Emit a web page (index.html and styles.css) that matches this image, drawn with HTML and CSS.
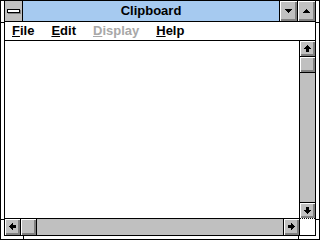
FILE: index.html
```html
<html>
<head>
<meta http-equiv="Content-Type" content="text/html; charset=UTF-8">
<link rel="stylesheet" href="styles.css">
</head>
<body>

<div id="clipboard-window">
    <div class="frame">
        <div class="title-bar">
            <div class="sys-menu"><span class="sys-bar"></span></div>
            <div class="caption">Clipboard</div>
            <div class="cap-button">
                <svg width="7" height="4" viewBox="0 0 7 4" shape-rendering="crispEdges"><path d="M0 0h7v1h-1v1h-1v1h-1v1h-1v-1h-1v-1h-1v-1h-1z" fill="#000"/></svg>
            </div>
            <div class="cap-button">
                <svg width="7" height="4" viewBox="0 0 7 4" shape-rendering="crispEdges"><path d="M3 0h1v1h1v1h1v1h1v1h-7v-1h1v-1h1v-1h1z" fill="#000"/></svg>
            </div>
        </div>

        <div class="menu-bar">
            <span class="menu-item"><u>F</u>ile</span>
            <span class="menu-item"><u>E</u>dit</span>
            <span class="menu-item disabled"><u>D</u>isplay</span>
            <span class="menu-item"><u>H</u>elp</span>
        </div>

        <div class="main-area">
            <div class="client"></div>
            <div class="v-scroll">
                <div class="scroll-button">
                    <svg width="7" height="7" viewBox="0 0 7 7" shape-rendering="crispEdges"><path d="M3 0h1v1h1v1h1v1h1v1h-2v3h-3v-3h-2v-1h1v-1h1v-1h1z" fill="#000"/></svg>
                </div>
                <div class="scroll-thumb"></div>
                <div class="scroll-track"></div>
                <div class="scroll-button end">
                    <svg width="7" height="7" viewBox="0 0 7 7" shape-rendering="crispEdges"><path d="M2 0h3v3h2v1h-1v1h-1v1h-1v1h-1v-1h-1v-1h-1v-1h-1v-1h2z" fill="#000"/></svg>
                </div>
            </div>
        </div>

        <div class="h-scroll">
            <div class="scroll-button">
                <svg width="7" height="7" viewBox="0 0 7 7" shape-rendering="crispEdges"><path d="M3 0h1v2h3v3h-3v2h-1v-1h-1v-1h-1v-1h-1v-1h1v-1h1v-1h1z" fill="#000"/></svg>
            </div>
            <div class="scroll-thumb"></div>
            <div class="scroll-track"></div>
            <div class="scroll-button end">
                <svg width="7" height="7" viewBox="0 0 7 7" shape-rendering="crispEdges"><path d="M3 0h1v1h1v1h1v1h1v1h-1v1h-1v1h-1v1h-1v-2h-3v-3h3z" fill="#000"/></svg>
            </div>
            <div class="size-box"></div>
        </div>
    </div>

    <!-- corner marks of the sizing border -->
    <span class="tick tick-v" style="left: 22px; bottom: 0;"></span>
    <span class="tick tick-v" style="left: 297px; bottom: 0;"></span>
    <span class="tick tick-h" style="left: 0; top: 21px;"></span>
    <span class="tick tick-h" style="right: 0; top: 21px;"></span>
    <span class="tick tick-h" style="left: 0; top: 218px;"></span>
    <span class="tick tick-h" style="right: 0; top: 218px;"></span>
</div>

</body>
</html>
```

FILE: styles.css
```css
body {
    margin: 0;
    background: #fff;
}

#clipboard-window {
    position: relative;
    width: 320px;
    height: 240px;
    box-sizing: border-box;
    border: 1px solid #000;
    padding: 0 3px 3px 3px;
    background: #fff;
    font-family: "Liberation Sans", Arial, sans-serif;
    font-size: 13px;
    font-weight: bold;
}

.frame {
    display: flex;
    flex-direction: column;
    height: 100%;
    border: 1px solid #000;
    border-top: none;
    box-sizing: border-box;
}

.title-bar {
    display: flex;
    height: 20px;
    border-bottom: 1px solid #000;
    background: #a6caf0;
}

.sys-menu {
    width: 17px;
    border-right: 1px solid #000;
    background: #c0c0c0;
    display: flex;
    align-items: center;
    justify-content: center;
}

.sys-bar {
    width: 11px;
    height: 2px;
    background: #fff;
    border: 1px solid #000;
    box-shadow: 1px 1px 0 #808080;
}

.caption {
    flex: 1;
    text-align: center;
    line-height: 20px;
    color: #000;
}

.cap-button {
    width: 17px;
    border-left: 1px solid #000;
    background: #c0c0c0;
    box-shadow: inset 1px 1px 0 #fff, inset -1px -1px 0 #808080, inset -2px -2px 0 #808080;
    display: flex;
    align-items: center;
    justify-content: center;
}

.cap-button svg {
    margin: 0 1px 1px 0;
}

.menu-bar {
    display: flex;
    gap: 17px;
    height: 18px;
    line-height: 18px;
    padding-left: 7px;
    border-bottom: 1px solid #000;
    background: #fff;
}

.menu-item {
    color: #000;
}

.menu-item u {
    text-decoration-thickness: 1px;
}

.menu-item.disabled {
    color: #a8a8a8;
}

.main-area {
    flex: 1;
    display: flex;
    min-height: 0;
}

.client {
    flex: 1;
    background: #fff;
}

.v-scroll {
    width: 15px;
    border-left: 1px solid #000;
    display: flex;
    flex-direction: column;
    background: #c0c0c0;
}

.h-scroll {
    height: 16px;
    border-top: 1px solid #000;
    display: flex;
    background: #c0c0c0;
}

.scroll-button,
.scroll-thumb {
    flex: none;
    width: 15px;
    height: 15px;
    background: #c0c0c0;
    box-shadow: inset 1px 1px 0 #fff, inset -1px -1px 0 #808080, inset -2px -2px 0 #808080;
    display: flex;
    align-items: center;
    justify-content: center;
}

.scroll-button svg {
    margin: 0 1px 1px 0;
}

.v-scroll .scroll-button,
.v-scroll .scroll-thumb {
    border-bottom: 1px solid #000;
}

.v-scroll .scroll-button.end {
    border-bottom: none;
    border-top: 1px solid #000;
}

.h-scroll .scroll-button,
.h-scroll .scroll-thumb {
    height: 16px;
    border-right: 1px solid #000;
}

.h-scroll .scroll-button.end {
    border-right: none;
    border-left: 1px solid #000;
}

.scroll-track {
    flex: 1;
    background: #c0c0c0;
}

.size-box {
    width: 15px;
    border-left: 1px solid #000;
    border-top: 1px dotted #000;
    margin-top: -1px;
    background: #fff;
}

.tick {
    position: absolute;
    background: #000;
}

.tick-v {
    width: 1px;
    height: 4px;
}

.tick-h {
    width: 4px;
    height: 1px;
}
```
